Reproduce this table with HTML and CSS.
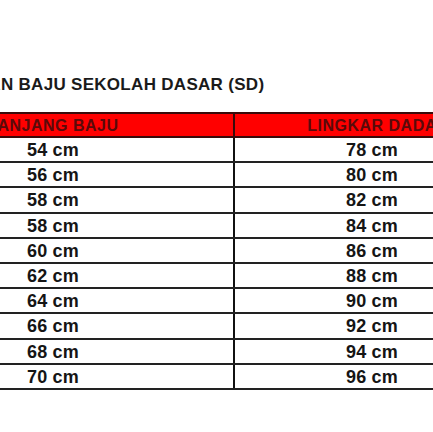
FILE: index.html
```html
<!DOCTYPE html>
<html>
<head>
<meta charset="utf-8">
<link rel="stylesheet" href="styles.css">
</head>
<body>
<div class="page">
  <h1 class="title">UKURAN BAJU SEKOLAH DASAR (SD)</h1>
  <div class="table">
    <div class="row head">
      <div class="cell left">PANJANG BAJU</div>
      <div class="cell right">LINGKAR DADA</div>
    </div>
    <div class="row"><div class="cell left">54 cm</div><div class="cell right">78 cm</div></div>
    <div class="row"><div class="cell left">56 cm</div><div class="cell right">80 cm</div></div>
    <div class="row"><div class="cell left">58 cm</div><div class="cell right">82 cm</div></div>
    <div class="row"><div class="cell left">58 cm</div><div class="cell right">84 cm</div></div>
    <div class="row"><div class="cell left">60 cm</div><div class="cell right">86 cm</div></div>
    <div class="row"><div class="cell left">62 cm</div><div class="cell right">88 cm</div></div>
    <div class="row"><div class="cell left">64 cm</div><div class="cell right">90 cm</div></div>
    <div class="row"><div class="cell left">66 cm</div><div class="cell right">92 cm</div></div>
    <div class="row"><div class="cell left">68 cm</div><div class="cell right">94 cm</div></div>
    <div class="row"><div class="cell left">70 cm</div><div class="cell right">96 cm</div></div>
  </div>
</div>
</body>
</html>
```

FILE: styles.css
```css
html, body {
  margin: 0;
  padding: 0;
  background: #ffffff;
  overflow: hidden;
  width: 433px;
  height: 432px;
}

.page {
  font-family: "Liberation Sans", Arial, sans-serif;
  padding-top: 75px;
}

.title {
  margin: 0 0 17px -62px;
  font-size: 17px;
  line-height: 20px;
  font-weight: 700;
  color: #1a1a1a;
  white-space: nowrap;
  letter-spacing: 0.3px;
}

.table {
  margin-left: -127px;
  width: 636px;
  border-top: 2px solid #3a0a0a;
}

.row {
  display: grid;
  grid-template-columns: 362px 274px;
  height: 25.2px;
  box-sizing: border-box;
  border-bottom: 2px solid #222222;
}

.cell {
  display: flex;
  align-items: center;
  justify-content: center;
  padding-top: 2px;
  font-size: 18px;
  font-weight: 700;
  color: #151515;
  white-space: nowrap;
  letter-spacing: 0.2px;
}

.cell.left {
  border-right: 2px solid #111111;
}

.head {
  height: 24px;
  background: #ff0000;
  border-bottom-color: #3a0a0a;
}

.head .cell {
  padding-top: 1px;
  font-size: 16px;
  color: #5a0a0a;
  letter-spacing: 0.5px;
}

.head .cell.left {
  border-right-color: #3a0a0a;
}
```
